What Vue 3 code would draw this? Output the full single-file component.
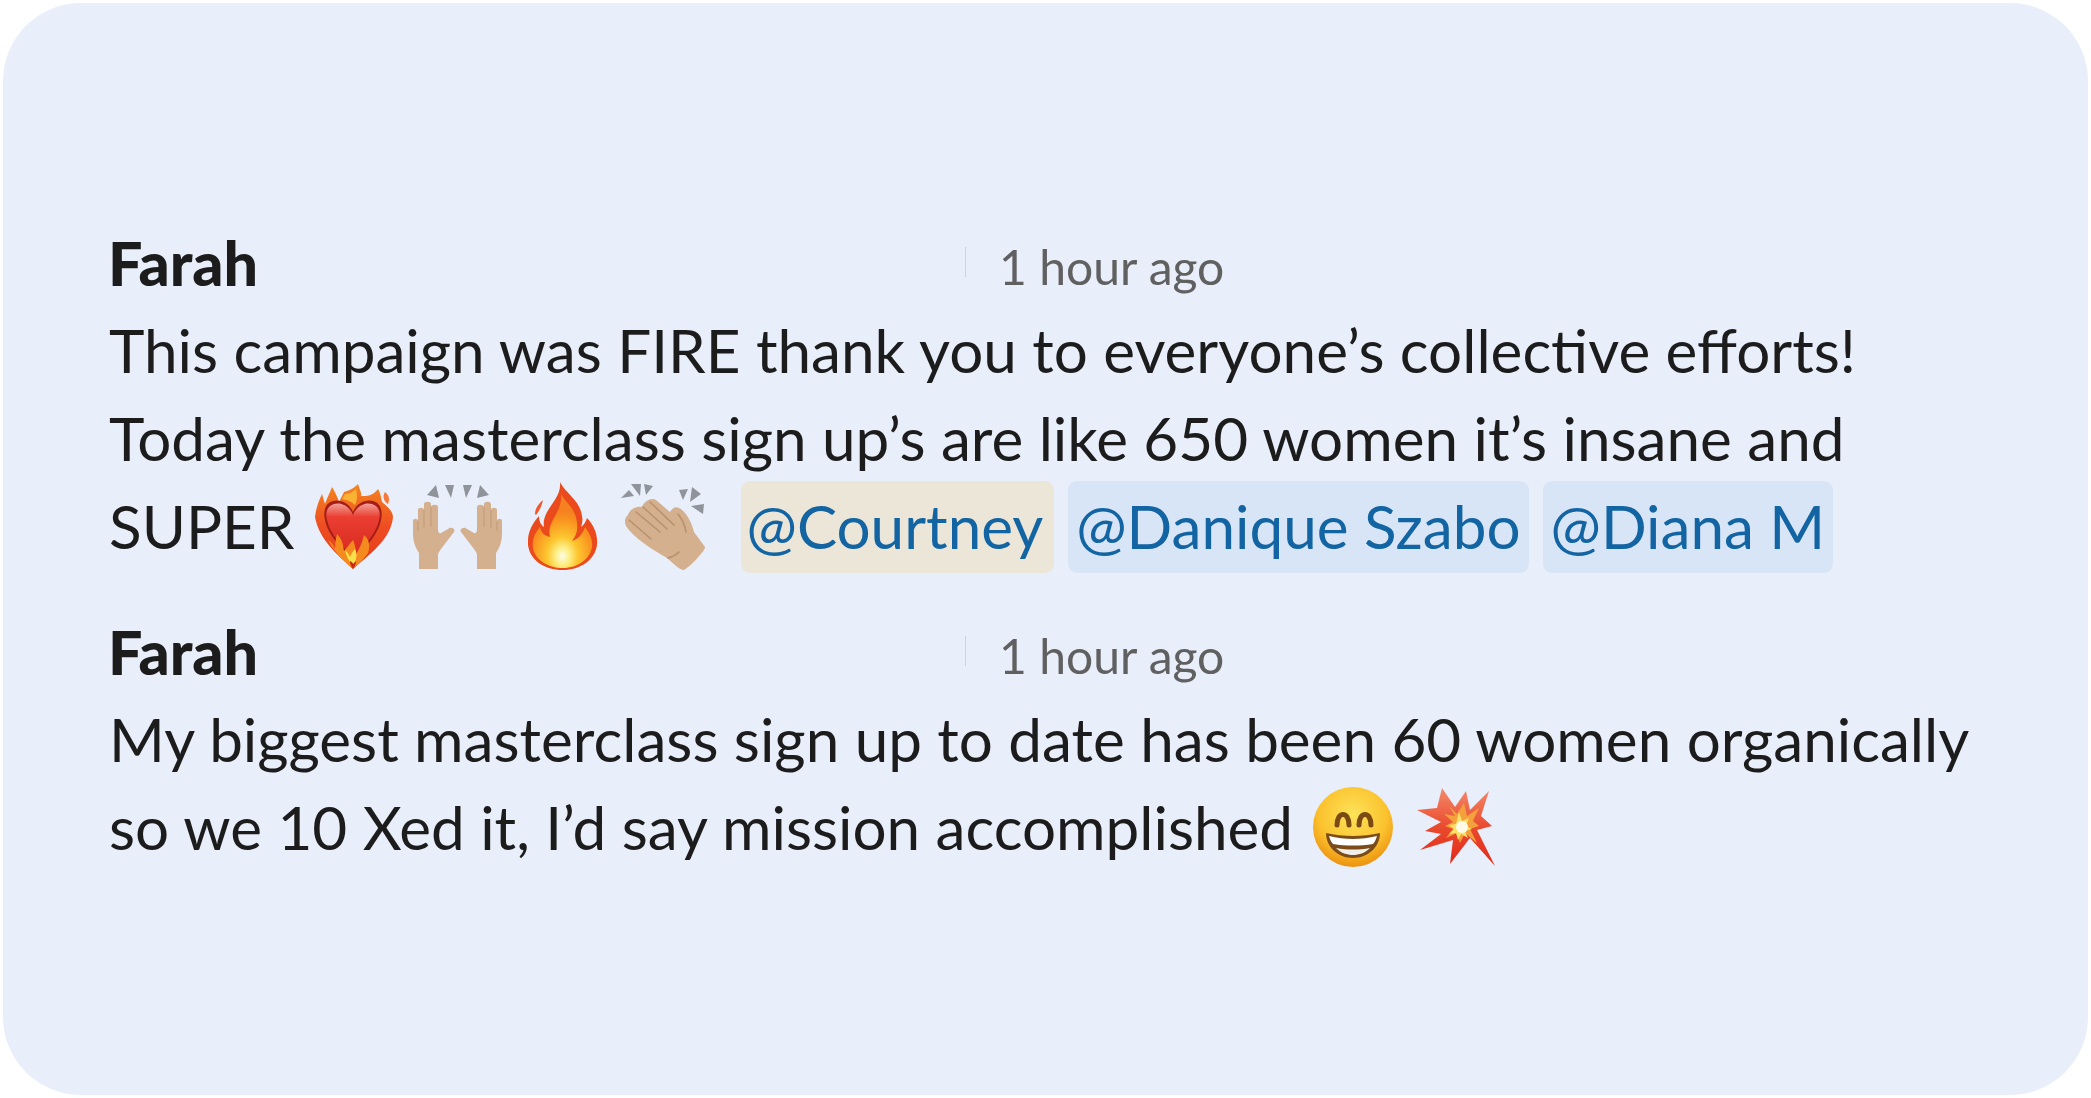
<script setup>
const firstMentions = [
  { name: '@Courtney', tone: 'warm' },
  { name: '@Danique Szabo', tone: 'cool' },
  { name: '@Diana M', tone: 'cool' },
]
</script>

<template>
  <main class="page">
    <section class="card">
      <article class="message first">
        <header class="meta">
          <strong class="author">Farah</strong>
          <span class="tick"></span>
          <time class="time">1 hour ago</time>
        </header>
        <p class="line">This campaign was FIRE thank you to everyone’s collective efforts!</p>
        <p class="line">Today the masterclass sign up’s are like 650 women it’s insane and</p>
        <p class="line emoji-line">
          <span>SUPER</span>
          <svg class="emoji heart" viewBox="0 0 80 88" aria-label="heart on fire">
            <defs>
              <linearGradient id="hf" x1="0" y1="0" x2="0" y2="1"><stop offset="0" stop-color="#f5861f"/><stop offset=".5" stop-color="#ee4d22"/><stop offset="1" stop-color="#e23a1c"/></linearGradient>
              <linearGradient id="hr" x1="0" y1="0" x2="0" y2="1"><stop offset="0" stop-color="#f2a097"/><stop offset=".25" stop-color="#ea3f32"/><stop offset="1" stop-color="#d8281e"/></linearGradient>
            </defs>
            <path d="M38 87C24 74 4 58 0 35 1 26 4 18 7 12l3 10c2-6 5-12 7-17 3 5 5 9 7 15l5-10c4-1 9-3 14-8 2 6 4 10 3 12 6 0 12 0 17-7 3 5 3 9 4 13 7 6 11 10 11 15C76 58 52 74 38 87Z" fill="url(#hf)"/>
            <path d="M70 10c4 3 5 7 3 12-4-2-6-8-3-12Z" fill="#f4793a"/>
            <path d="M30 12c3 0 7-1 11-5 1 6 2 10-1 16-3-3-7-5-13-6Z" fill="#f9b233"/>
            <path d="M38 30C34 20 24 17 18 19 10 21 8 30 10 38c3 16 18 30 28 40 10-10 25-24 28-40 2-8 0-17-8-19-6-2-16 1-20 11Z" fill="#a51d16"/>
            <path d="M38 33C34 23 25 20 19 22 12 24 10 31 12 38c3 15 17 28 26 37 9-9 23-22 26-37 2-7 0-14-7-16-6-2-15 1-19 11Z" fill="url(#hr)"/>
            <path d="M38 87c-9-8-19-17-25-29 3 2 6 5 7 9 0-6 1-11 2-15 5 5 6 10 7 17 3-3 5-7 9-11 2 5 3 9 3 14 4-6 7-14 8-19 6 5 6 12 4 18-4 6-10 11-15 16Z" fill="#f58a1f"/>
            <path d="M38 84c-4-5-7-10-8-16 2 2 4 4 5 7 1-3 3-6 5-8 3 6 1 12-2 17Z" fill="#f7e04a"/>
            <path d="M38 87c-2-3-3-5-3-8 2 1 3 2 3 3 1-1 2-2 3-3 0 3-1 5-3 8Z" fill="#c9261a"/>
          </svg>
          <svg class="emoji raised" viewBox="0 0 90 86" aria-label="raising hands">
            <g fill="#8f949b">
              <path d="M14 12l9-10 3 13Z"/><path d="M32 2l9 0-3 13Z"/><path d="M50 2l9 0-6 13Z"/><path d="M67 2l9 10-12 3Z"/>
            </g>
            <g>
              <path d="M6 86V70C2 64 0 58 0 50V38c0-3 5-3 5 0V27c0-3 6-3 6 0v-6c0-3 7-3 7 0v3c0-3 7-3 7 0v22c0 3 1 5 3 4l7-4c3-3 8 0 6 3L28 66c-2 3-3 4-3 6v14Z" fill="#d4b08e"/>
              <path d="M5 38v10M11 27v18M18 24v20" fill="none" stroke="#c09b78" stroke-width="1"/>
            </g>
            <g transform="matrix(-1 0 0 1 89 0)">
              <path d="M6 86V70C2 64 0 58 0 50V38c0-3 5-3 5 0V27c0-3 6-3 6 0v-6c0-3 7-3 7 0v3c0-3 7-3 7 0v22c0 3 1 5 3 4l7-4c3-3 8 0 6 3L28 66c-2 3-3 4-3 6v14Z" fill="#d4b08e"/>
              <path d="M5 38v10M11 27v18M18 24v20" fill="none" stroke="#c09b78" stroke-width="1"/>
            </g>
          </svg>
          <svg class="emoji fire" viewBox="0 0 70 88" aria-label="fire">
            <defs>
              <radialGradient id="fc" cx=".5" cy=".84" r=".62"><stop offset="0" stop-color="#fdfbe6"/><stop offset=".18" stop-color="#fdf08a"/><stop offset=".42" stop-color="#fdc62f"/><stop offset=".8" stop-color="#f9931f"/><stop offset="1" stop-color="#f5811f"/></radialGradient>
            </defs>
            <path d="M32 0c6 12 20 18 22 34 1 4 0 8-1 11 3-2 5-6 6-9 7 7 11 17 10 27-2 15-17 25-34 25C16 88 2 78 0 63c-1-12 4-21 11-29 0 5 2 9 5 11C13 28 34 18 32 0Z" fill="#ea4a1c"/>
            <path d="M7 32c0-5 3-10 8-14-1 5-3 10-7 15Z" fill="#f1582c"/>
            <path d="M33 12c5 9 15 15 16 29 1 8-1 13-5 18 7-2 11-8 13-14 5 7 8 13 7 20-2 12-14 21-29 21S7 78 5 66c-1-9 2-15 7-21 1 6 5 9 10 10-4-16 13-24 11-43Z" fill="url(#fc)"/>
          </svg>
          <svg class="emoji clap" viewBox="0 0 86 88" aria-label="clapping hands">
            <g fill="#8f949b">
              <path d="M1 16l8-8 5 6Z"/><path d="M11 2l10 0-1 12Z"/><path d="M24 2l9 2-7 9Z"/><path d="M59 8l9-1-5 11Z"/><path d="M72 5l9 7-11 8Z"/><path d="M71 24l13-2-1 10Z"/>
            </g>
            <path d="M8 33c2-7 10-9 14-8 2-6 10-10 14-7l14 12c3-6 8-6 12-2 6 5 10 14 12 22l11 15c1 3-15 20-21 23-4 0-8-4-17-12C30 66 14 56 6 44c-2-4-1-9 2-11Z" fill="#d4b08e"/>
            <g fill="none" stroke="#b8916d" stroke-width="1.6" stroke-linecap="round">
              <path d="M16 30l24 20"/><path d="M23 25l24 22"/><path d="M9 38l22 19"/><path d="M30 20l24 23"/><path d="M58 32c4 5 7 11 8 18"/><path d="M48 76c4-1 8-3 11-6"/>
            </g>
          </svg>
          <span class="mentions">
            <span v-for="m in firstMentions" :key="m.name" class="mention" :class="m.tone">{{ m.name }}</span>
          </span>
        </p>
      </article>

      <article class="message">
        <header class="meta">
          <strong class="author">Farah</strong>
          <span class="tick"></span>
          <time class="time">1 hour ago</time>
        </header>
        <p class="line">My biggest masterclass sign up to date has been 60 women organically</p>
        <p class="line emoji-line last">
          <span>so we 10 Xed it, I’d say mission accomplished</span>
          <svg class="emoji grin" viewBox="0 0 80 80" aria-label="grinning face">
            <defs>
              <radialGradient id="gf" cx=".5" cy=".35" r=".65"><stop offset="0" stop-color="#fde35a"/><stop offset=".65" stop-color="#fbc22e"/><stop offset="1" stop-color="#ec920f"/></radialGradient>
            </defs>
            <circle cx="40" cy="40" r="40" fill="url(#gf)"/>
            <path d="M24 38c0-14 12-14 12 0M46 38c0-14 12-14 12 0" fill="none" stroke="#7a4a12" stroke-width="5" stroke-linecap="round"/>
            <path d="M13 46c17 4 37 4 54 0 0 14-12 25-27 25S13 60 13 46Z" fill="#7b4c18"/>
            <path d="M16 49c16 4 32 4 48 0-1 3-2 6-4 8-13 2-27 2-40 0-2-2-3-5-4-8Z" fill="#fff"/>
            <path d="M23 61c11 2 23 2 34 0-5 5-11 7-17 7s-12-2-17-7Z" fill="#f1efea"/>
          </svg>
          <svg class="emoji boom" viewBox="0 0 78 78" aria-label="collision">
            <defs>
              <linearGradient id="bm" x1="0" y1="0" x2="0" y2="1"><stop offset="0" stop-color="#f48a6c"/><stop offset=".5" stop-color="#ea4a2e"/><stop offset="1" stop-color="#e2281a"/></linearGradient>
            </defs>
            <path d="M25 0l13 19L49 3l4 19L72 3l-8 25 11 10-15 4 18 36-25-28-20 26 3-24L3 62l21-16-16-3 16-9L0 22l20-2Z" fill="url(#bm)"/>
            <path d="M32 18l8 8 7-11 3 13 12-8-6 13 6 5-9 3 7 14-12-10-5 10-3-10-11 5 7-9-8-3 8-4-9-8 11 2Z" fill="#f4a03c"/>
            <path d="M42 24l3 9 7-3-3 8 6 3-7 2 3 7-7-4-3 6-2-7-7 1 5-5-5-4 7-1Z" fill="#fbe06a"/>
            <circle cx="45" cy="39" r="6" fill="#fffbe6"/>
          </svg>
        </p>
      </article>
    </section>
  </main>
</template>

<style scoped>
.page {
  width: 2091px;
  height: 1098px;
  padding: 3px;
  box-sizing: border-box;
  background: #fff;
  font-family: Lato, "Liberation Sans", sans-serif;
}
.card {
  height: 100%;
  box-sizing: border-box;
  padding: 215px 100px 0 106px;
  border-radius: 78px;
  background: #e8eefa;
  color: #1d1c1d;
  font-size: 60.2px;
}
.message {
  filter: blur(0.5px);
}
.message.first {
  margin-bottom: 37px;
}
.meta {
  display: flex;
  align-items: center;
  height: 88px;
}
.author {
  width: 857px;
  margin-left: -1px;
  font-size: 61px;
  font-weight: 900;
}
.tick {
  width: 1px;
  height: 30px;
  margin-right: 33px;
  background: #cdd2dc;
}
.time {
  margin-top: 9px;
  color: #616061;
  font-size: 48px;
}
.line {
  margin: 0;
  height: 88px;
  line-height: 88px;
  white-space: nowrap;
}
.emoji-line {
  display: flex;
  align-items: center;
}
.emoji {
  flex: none;
  display: block;
}
.heart { width: 80px; height: 88px; margin-left: 20px; }
.raised { width: 90px; height: 86px; margin-left: 18px; }
.fire { width: 70px; height: 88px; margin-left: 25px; }
.clap { width: 86px; height: 88px; margin-left: 22px; }
.mentions {
  display: flex;
  gap: 14px;
  margin-left: 35px;
  margin-top: 2px;
}
.mention {
  height: 92px;
  line-height: 90px;
  padding: 0 8px;
  border-radius: 9px;
  color: #1264a3;
}
.warm { padding: 0 11px 0 6px; background: #ebe6d7; }
.cool { background: #d8e5f6; }
.grin { width: 80px; height: 80px; margin-left: 20px; }
.boom { width: 78px; height: 78px; margin-left: 24px; }
</style>
